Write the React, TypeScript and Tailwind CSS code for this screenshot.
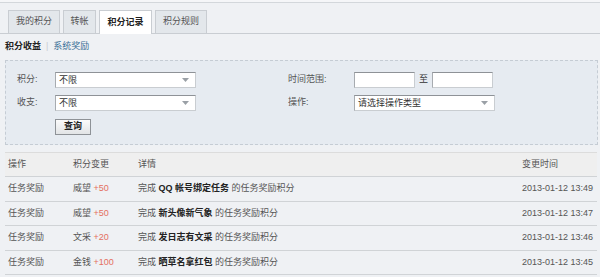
import React from "react";

const font = { fontFamily: '"Liberation Sans", "Noto Sans CJK SC", sans-serif' };

function Arrow() {
  return (
    <svg width="7" height="4" viewBox="0 0 7 4" className="shrink-0">
      <path d="M0 0 L7 0 L3.5 4 Z" fill="#9aa0a6" />
    </svg>
  );
}

function Select({ text, w }: { text: string; w: string }) {
  return (
    <div
      className={`${w} h-[16px] bg-white border border-[#c9cdd1] border-t-[#8e9297] border-l-[#a7abb0] flex items-center justify-between pl-[3px] pr-[6px] text-[#333]`}
    >
      <span className="leading-none">{text}</span>
      <Arrow />
    </div>
  );
}

function Input({ w }: { w: string }) {
  return (
    <div className={`${w} h-[16px] bg-white border border-[#c9cdd1] border-t-[#8e9297] border-l-[#a7abb0]`} />
  );
}

const rows = [
  { op: "任务奖励", kind: "威望", amt: "+50", task: "QQ 帐号绑定任务", time: "2013-01-12 13:49" },
  { op: "任务奖励", kind: "威望", amt: "+50", task: "新头像新气象", time: "2013-01-12 13:47" },
  { op: "任务奖励", kind: "文采", amt: "+20", task: "发日志有文采", time: "2013-01-12 13:46" },
  { op: "任务奖励", kind: "金钱", amt: "+100", task: "晒草名拿红包", time: "2013-01-12 13:45" },
];

export default function App() {
  const tabs = ["我的积分", "转帐", "积分记录", "积分规则"];
  return (
    <div className="w-[600px] h-[277px] overflow-hidden bg-[#eff1f4] text-[9px] text-[#555]" style={font}>
      <div className="h-[2px] bg-[#f5f6f8]" />
      <div className="border-t border-[#d3d7db]" />
      {/* tabs */}
      <div className="mt-[7px] pl-[8px] flex items-end gap-[3px] border-b border-[#c9cdd2] h-[24px]">
        {tabs.map((t, i) =>
          i === 2 ? (
            <div
              key={t}
              className="h-[24px] w-[53px] mb-[-1px] bg-white border border-b-0 border-[#c9cdd2] flex items-center justify-center font-bold text-[#222]"
            >
              {t}
            </div>
          ) : (
            <div
              key={t}
              className={`h-[23px] ${i === 1 ? "w-[33px]" : "w-[52px]"} bg-[#e3e7eb] border border-b-0 border-[#c9cdd2] flex items-center justify-center text-[#555]`}
            >
              {t}
            </div>
          )
        )}
      </div>
      {/* subnav */}
      <div className="h-[26px] pl-[5px] flex items-center">
        <span className="font-bold text-[#222]">积分收益</span>
        <span className="mx-[5px] text-[#c8ccd0]">|</span>
        <span className="text-[#3a6e96]">系统奖励</span>
      </div>
      {/* filter */}
      <div className="mx-[5px] w-[593px] h-[85px] border border-dashed border-[#c5ccd4] bg-[#e6ebf1] pt-[11px]">
        <div className="flex">
          <div className="w-[282px] flex flex-col gap-[7px] pl-[11px]">
            <div className="flex items-center">
              <span className="w-[38px]">积分:</span>
              <Select text="不限" w="w-[141px]" />
            </div>
            <div className="flex items-center">
              <span className="w-[38px]">收支:</span>
              <Select text="不限" w="w-[141px]" />
            </div>
            <div className="flex items-center pl-[38px] mt-[1px]">
              <div className="w-[36px] h-[16px] border border-[#8e9297] bg-gradient-to-b from-[#fbfbfb] to-[#e2e4e6] flex items-center justify-center font-bold text-[#222]">
                查询
              </div>
            </div>
          </div>
          <div className="flex flex-col gap-[7px]">
            <div className="flex items-center">
              <span className="w-[66px]">时间范围:</span>
              <Input w="w-[61px]" />
              <span className="w-[17px] text-center text-[#333]">至</span>
              <Input w="w-[61px]" />
            </div>
            <div className="flex items-center">
              <span className="w-[66px]">操作:</span>
              <Select text="请选择操作类型" w="w-[141px]" />
            </div>
          </div>
        </div>
      </div>
      {/* table */}
      <div className="mt-[7px] mx-[5px] w-[592px]">
        <div className="h-[25px] bg-[#efefef] border-t border-[#dcdcdc] border-b border-b-[#d0d3d6] flex items-center text-[#555]">
          <span className="w-[68px] pl-[3px]">操作</span>
          <span className="w-[65px]">积分变更</span>
          <span className="flex-1">详情</span>
          <span className="w-[75px]">变更时间</span>
        </div>
        {rows.map((r, i) => (
          <div key={i} className="h-[24.5px] border-b border-[#d0d3d6] flex items-center">
            <span className="w-[68px] pl-[3px]">{r.op}</span>
            <span className="w-[65px]">
              {r.kind} <span className="text-[#e4705f]">{r.amt}</span>
            </span>
            <span className="flex-1">
              完成 <b className="text-[#222]">{r.task}</b> 的任务奖励积分
            </span>
            <span className="w-[75px] text-[#555]">{r.time}</span>
          </div>
        ))}
      </div>
    </div>
  );
}
